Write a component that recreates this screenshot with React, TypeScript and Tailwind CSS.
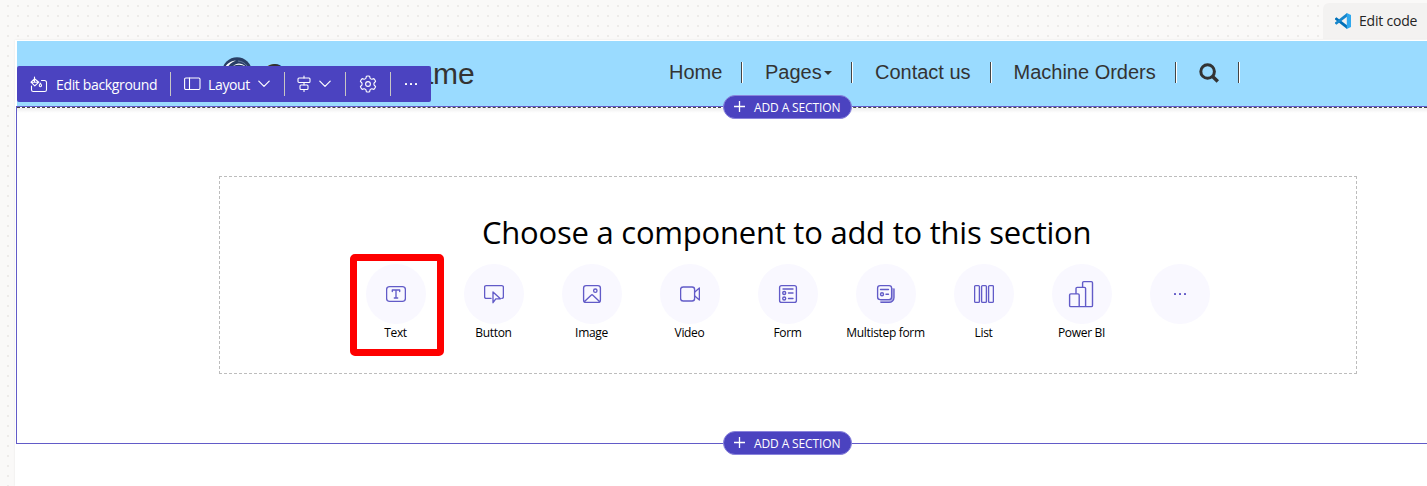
import type { ReactNode } from "react";

const stroke = {
  fill: "none",
  stroke: "currentColor",
  strokeLinecap: "round",
  strokeLinejoin: "round",
} as const;

function Icon({ size = 20, width = 1.35, children }: { size?: number; width?: number; children: ReactNode }) {
  return (
    <svg width={size} height={size} viewBox={`0 0 ${size} ${size}`} strokeWidth={width} {...stroke} className="shrink-0">
      {children}
    </svg>
  );
}

function Dots() {
  return (
    <Icon>
      <g fill="currentColor" stroke="none">
        <rect x="4" y="9" width="2" height="2" rx=".5" />
        <rect x="9" y="9" width="2" height="2" rx=".5" />
        <rect x="14" y="9" width="2" height="2" rx=".5" />
      </g>
    </Icon>
  );
}

function Chevron() {
  return (
    <svg width="12" height="8" viewBox="0 0 12 8" strokeWidth="1.2" {...stroke} className="shrink-0">
      <path d="M.8 1.2 6 6.4l5.2-5.2" />
    </svg>
  );
}

function Separator() {
  return <div className="h-6 w-px shrink-0 bg-[#c8c6c4]" />;
}

function Toolbar() {
  return (
    <div className="absolute left-0 top-[25px] flex h-9 w-[414px] items-center rounded-[2px] bg-[#4b43c0] font-['Open_Sans',sans-serif] text-sm text-white">
      <div className="flex w-[153px] items-center pl-[13px]">
        <svg width="18" height="18" viewBox="0 0 18 18" strokeWidth="1.1" {...stroke} className="mt-px shrink-0">
          <path d="M11.5 4.5h3.2a1.8 1.8 0 0 1 1.8 1.8v7.4a1.8 1.8 0 0 1-1.8 1.8H3.3a1.8 1.8 0 0 1-1.8-1.8V10" />
          <path d="M4.5 1v4.5M4.5 2.8 1 6.2l3.8 3.6 4-3.6-4.3-3.4ZM1 6.2h7.8" />
          <path d="M10.4 7.2c-.7 1-1.1 1.6-1.1 2.4a1.1 1.1 0 0 0 2.2 0c0-.8-.4-1.4-1.1-2.4Z" />
        </svg>
        <span className="ml-2 mt-[2px] whitespace-nowrap tracking-[-0.35px]">Edit background</span>
      </div>
      <Separator />
      <div className="flex w-[113px] items-center pl-[13px]">
        <svg width="17" height="14" viewBox="0 0 17 14" strokeWidth="1.1" {...stroke} className="shrink-0">
          <rect x=".6" y="1" width="15.4" height="11.5" rx="1.2" />
          <path d="M5.5 1v11.5" />
        </svg>
        <span className="ml-[7px] mt-[2px] w-[42px] whitespace-nowrap tracking-[-0.35px]">Layout</span>
        <span className="ml-2 flex"><Chevron /></span>
      </div>
      <Separator />
      <div className="flex w-[60px] items-center gap-2 pl-3">
        <svg width="14" height="18" viewBox="0 0 14 18" strokeWidth="1.1" {...stroke} className="shrink-0">
          <path d="M7 1v2M7 7.5V10M7 14.5v2" />
          <rect x="1" y="3" width="12" height="4.5" rx="1" />
          <rect x="3" y="10" width="8" height="4.5" rx="1" />
        </svg>
        <Chevron />
      </div>
      <Separator />
      <div className="flex w-11 items-center justify-center">
        <svg width="18" height="18" viewBox="0 0 18 18" strokeWidth="1.1" {...stroke} className="shrink-0">
          <path d="M7.4 1.2Q9 .7 10.6 1.2L11.1 3.3Q11.5 4 12.8 4.2L14.9 3.6Q16.2 4.9 16.6 6.4L15.1 8Q14.6 9 15.1 10L16.6 11.6Q16.2 13.1 14.9 14.4L12.8 13.8Q11.5 14 11.1 14.7L10.6 16.8Q9 17.3 7.4 16.8L6.9 14.7Q6.5 14 5.2 13.8L3.1 14.4Q1.8 13.1 1.4 11.6L2.9 10Q3.4 9 2.9 8L1.4 6.4Q1.8 4.9 3.1 3.6L5.2 4.2Q6.5 4 6.9 3.3Z" />
          <circle cx="9" cy="9" r="2.4" />
        </svg>
      </div>
      <Separator />
      <div className="flex w-10 items-center justify-center"><Dots /></div>
    </div>
  );
}

function NavSeparator() {
  return <div className="mt-[21px] h-[21px] w-[2px] shrink-0 border-r border-white bg-[#444]" />;
}

function Header() {
  return (
    <header className="relative ml-[2px] flex h-[65px] bg-[#9adbff] font-['Liberation_Sans',Arial,sans-serif] text-[#333]">
      <div className="flex w-[652px] pl-[205px]">
        <svg width="30" height="30" viewBox="0 0 30 30" fill="none" className="mt-4 shrink-0">
          <circle cx="15" cy="15" r="14.8" fill="#293f66" />
          <path d="M2.5 11.5C4.5 6.5 8.5 4 14 3.4 9.5 5.2 6.5 7.5 5 12Z" fill="#fff" />
          <path d="M11 9c4-3.6 8.500-3.400 13 .8-4-2.400-8-2.800-13-.8Z" fill="#fff" />
          <path d="M16 4c4 .3 7 2 9 5" stroke="#7187ad" strokeWidth=".8" />
        </svg>
        <span className="ml-[11px] mt-[15px] whitespace-nowrap text-[30px] leading-9">Company name</span>
      </div>
      <nav className="flex text-xl leading-[62px]">
        <a className="w-[72px]">Home</a>
        <NavSeparator />
        <a className="flex w-[108px] pl-[22px]">
          Pages
          <svg width="8" height="4" viewBox="0 0 8 4" className="ml-[2px] mt-[30px]"><path d="M0 0h8L4 4Z" fill="#333" /></svg>
        </a>
        <NavSeparator />
        <a className="w-[137px] pl-[22px]">Contact us</a>
        <NavSeparator />
        <a className="w-[183px] whitespace-nowrap pl-[21.5px]">Machine Orders</a>
        <NavSeparator />
        <a className="w-[61px] pl-[22px]">
          <svg width="20" height="20" viewBox="0 0 20 20" className="mt-[22px]" fill="none" stroke="#333">
            <circle cx="8.6" cy="8.5" r="6.8" strokeWidth="3" />
            <path d="m13.6 13.5 5.2 5" strokeWidth="3.5" />
          </svg>
        </a>
        <NavSeparator />
      </nav>
      <Toolbar />
    </header>
  );
}

function AddSection({ place }: { place: string }) {
  return (
    <button className={`absolute left-[706px] z-10 flex h-6 w-[129px] items-center rounded-full border border-[#8a84dc] bg-[#4b43c0] pl-[9px] font-['Open_Sans',sans-serif] text-xs text-white ${place}`}>
      <svg width="13" height="13" viewBox="0 0 13 13" className="-mt-px shrink-0" stroke="currentColor" strokeWidth="1.3"><path d="M6.5 1v11M1 6.5h11" /></svg>
      <span className="ml-2 mt-px whitespace-nowrap tracking-[-0.12px]">ADD A SECTION</span>
    </button>
  );
}

const components: { label: string; icon: ReactNode }[] = [
  {
    label: "Text",
    icon: (
      <Icon>
        <rect x=".6" y="2.6" width="18.8" height="14.8" rx="3" />
        <path d="M6.3 7.5V6h7.4v1.5M10 6v8M8.3 14h3.4" />
      </Icon>
    ),
  },
  {
    label: "Button",
    icon: (
      <Icon>
        <path d="M7 14.4H2.2A1.6 1.6 0 0 1 .6 12.8V3.2a1.6 1.6 0 0 1 1.6-1.6h15.6a1.6 1.6 0 0 1 1.6 1.6v9.6a1.6 1.6 0 0 1-1.6 1.6" />
        <path d="M9 8v10.7l2.8-3.900h4.6Z" />
      </Icon>
    ),
  },
  {
    label: "Image",
    icon: (
      <Icon>
        <rect x="1.6" y="1.6" width="16.8" height="16.8" rx="2.5" />
        <circle cx="13.3" cy="6.7" r="1.7" />
        <path d="m2.5 17.5 6.6-6.3q.9-.8 1.8 0l6.6 6.3" />
      </Icon>
    ),
  },
  {
    label: "Video",
    icon: (
      <Icon>
        <rect x=".6" y="3" width="14" height="14" rx="2.5" />
        <path d="m14.8 8 4.6-4v12l-4.6-4" />
      </Icon>
    ),
  },
  {
    label: "Form",
    icon: (
      <Icon>
        <rect x="1.6" y="1.6" width="16.8" height="16.8" rx="2" />
        <path d="M5 5h10M10.5 9H15M10.5 14.5H15" />
        <circle cx="6.2" cy="9" r="1.5" />
        <circle cx="6.2" cy="14.5" r="1.5" />
      </Icon>
    ),
  },
  {
    label: "Multistep form",
    icon: (
      <Icon>
        <path d="M5 17.2h8.2a3.5 3.5 0 0 0 3.5-3.5V5" strokeWidth="2" opacity=".45" />
        <rect x="1.6" y="1.6" width="14" height="14" rx="2.5" />
        <path d="M4.5 5.5h8M10 10.2h2.5M5 18.4h8a5 5 0 0 0 5-5V5" />
        <circle cx="6" cy="10.2" r="1.5" />
      </Icon>
    ),
  },
  {
    label: "List",
    icon: (
      <Icon>
        <rect x=".6" y="1.6" width="4.8" height="16.8" rx="1" />
        <rect x="7.6" y="1.6" width="4.8" height="16.8" rx="1" />
        <rect x="14.6" y="1.6" width="4.8" height="16.8" rx="1" />
      </Icon>
    ),
  },
  {
    label: "Power BI",
    icon: (
      <Icon size={28} width={1.4}>
        <path d="M1.6 25.4V15.1a1.2 1.2 0 0 1 1.2-1.2H10a1.2 1.2 0 0 1 1.2 1.2v11.5M8 13.9V8.6a1.2 1.2 0 0 1 1.2-1.2h7.2a1.2 1.2 0 0 1 1.2 1.2v18M14.6 7.4V2.8a1.2 1.2 0 0 1 1.2-1.2h7.5a1.2 1.2 0 0 1 1.2 1.2v22.6a1.2 1.2 0 0 1-1.2 1.2H2.8a1.2 1.2 0 0 1-1.2-1.2" />
      </Icon>
    ),
  },
  { label: "", icon: <Dots /> },
];

function Picker() {
  return (
    <div className="ml-[202px] mt-[68px] h-[198px] w-[1138px] border border-dashed border-[#bdbdbd] pt-[31px] font-['Open_Sans',sans-serif]">
      <h1 className="ml-[262px] whitespace-nowrap text-[31px] leading-[48px] tracking-[-0.23px] text-black">
        Choose a component to add to this section
      </h1>
      <div className="ml-[127px] mt-2 flex">
        {components.map(({ label, icon }, i) => (
          <div key={i} className="relative flex w-[98px] shrink-0 flex-col items-center">
            {i === 0 && <div className="absolute left-[3px] top-[-10px] h-[102px] w-[94px] rounded-[5px] border-[7px] border-[#fe0000]" />}
            <div className="flex size-[60px] items-center justify-center rounded-full bg-[#f9f8ff] text-[#625bc8]">{icon}</div>
            <span className="mr-px whitespace-nowrap text-xs leading-[18px] tracking-[-0.32px] text-black">{label}</span>
          </div>
        ))}
      </div>
    </div>
  );
}

function EditCode() {
  return (
    <div className="mt-[3px] flex h-9 w-[104px] items-center rounded-tl-[6px] bg-[#f3f2f1] pl-3 font-['Open_Sans',sans-serif] text-sm text-[#242424]">
      <svg width="16" height="16" viewBox="0 0 16 16" className="shrink-0">
        <path d="M0 5.5 1.4 4.3 12 12.3V16L0 6.4Z" fill="#0070b8" />
        <path d="M0 10.5 1.4 11.7 12 3.7V0L0 9.6Z" fill="#1686cc" />
        <path d="m11.8 0 4.2 2v12l-4.2 2Z" fill="#2fa8ee" />
      </svg>
      <span className="ml-2 whitespace-nowrap tracking-[-0.2px]">Edit code</span>
    </div>
  );
}

export default function App() {
  return (
    <div className="relative flex h-[486px] w-[1427px] flex-col overflow-hidden bg-[#faf9f8]">
      <svg className="absolute inset-0" width="1427" height="486">
        <defs>
          <pattern id="grid" width="10" height="10" patternUnits="userSpaceOnUse">
            <rect x="7" y="5" width="2" height="2" fill="#edebe9" />
          </pattern>
        </defs>
        <rect width="1427" height="486" fill="url(#grid)" />
      </svg>
      <div className="relative flex h-10 justify-end">
        <EditCode />
      </div>
      <main className="relative ml-[15px] flex-1 bg-white pt-px shadow-[0_0_2px_rgba(0,0,0,0.08)]">
        <Header />
        <section className="relative ml-px h-[338px] border-y border-l border-[#625bc8]">
          <div className="h-px border-t border-dashed border-[#444]" />
          <div className="h-[5px] bg-gradient-to-b from-black/7 to-transparent" />
          <AddSection place="top-[-12px]" />
          <div className="-mt-[5px]"><Picker /></div>
          <AddSection place="bottom-[-12px]" />
        </section>
      </main>
    </div>
  );
}
